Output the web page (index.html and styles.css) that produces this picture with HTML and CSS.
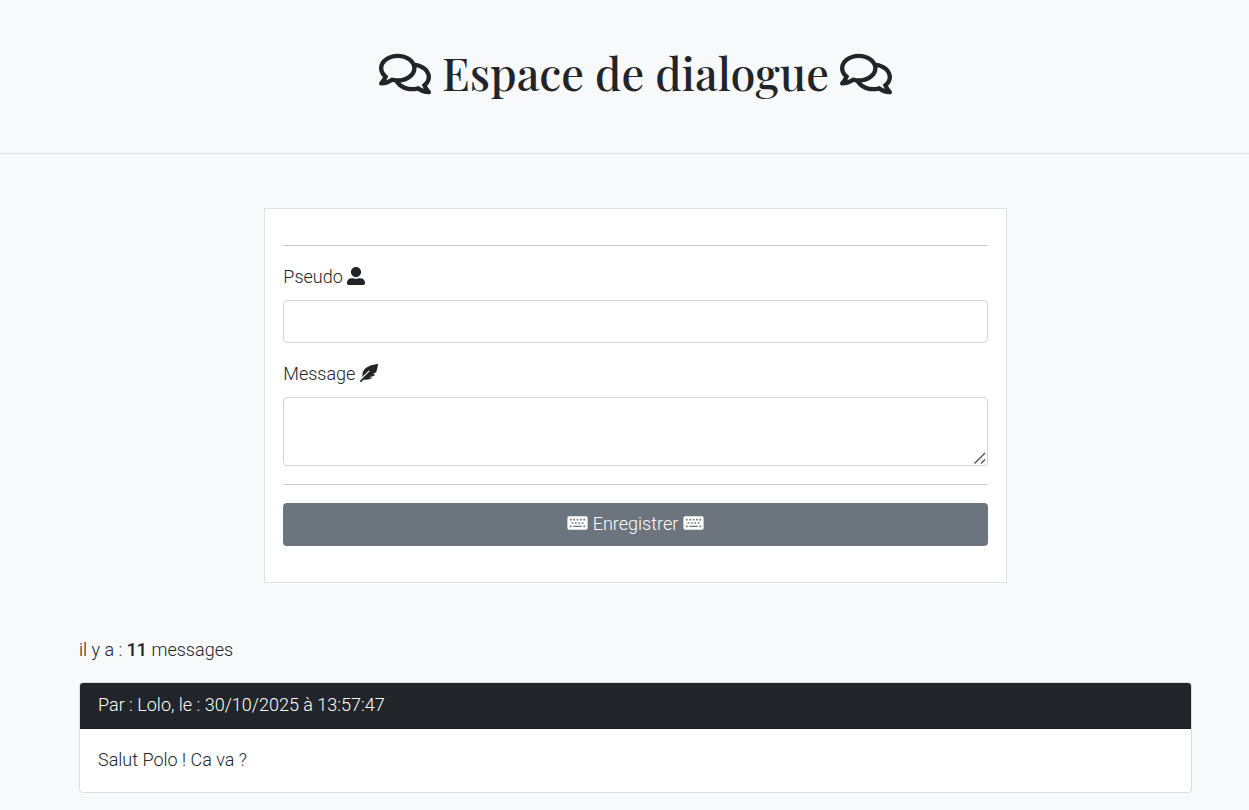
FILE: index.html
```html
<!DOCTYPE html>
<html lang="fr">
<head>
<meta charset="utf-8">
<meta name="viewport" content="width=device-width, initial-scale=1">
<title>Espace de dialogue</title>
<link rel="stylesheet" href="styles.css">
</head>
<body>
<svg class="sprite" aria-hidden="true">
  <symbol id="comments" viewBox="0 0 576 512"><path d="M532 386.2c27.5-27.1 44-61.1 44-98.2 0-80-76.5-146.1-176.2-157.9C368.3 72.5 294.3 32 208 32 93.1 32 0 103.6 0 192c0 37 16.5 71 44 98.2-15.3 30.7-37.3 54.5-37.7 54.9-6.3 6.7-8.1 16.5-4.4 25 3.6 8.5 12 14 21.2 14 53.5 0 96.7-20.2 125.2-38.8 9.2 2.1 18.7 3.7 28.4 4.9C208.1 407.6 281.8 448 368 448c20.8 0 40.8-2.4 59.8-6.8C456.3 459.7 499.4 480 553 480c9.2 0 17.5-5.5 21.2-14 3.6-8.5 1.9-18.3-4.4-25-.4-.3-22.5-24.1-37.8-54.8zm-392.8-92.3L122.1 305c-14.1 9.1-28.5 16.3-43.1 21.4 2.7-4.7 5.4-9.7 8-14.8l15.5-31.1L77.7 256C64.2 242.6 48 220.7 48 192c0-60.7 73.3-112 160-112s160 51.3 160 112-73.3 112-160 112c-16.5 0-33-1.9-49-5.6l-19.8-4.5zM498.3 352l-24.7 24.4 15.5 31.1c2.6 5.1 5.3 10.1 8 14.8-14.6-5.1-29-12.3-43.1-21.4l-17.1-11.1-19.9 4.6c-16 3.7-32.5 5.6-49 5.6-54 0-102.2-20.1-131.3-49.7C338 339.5 416 272.9 416 192c0-3.4-.4-6.7-.7-10C479.7 196.5 528 238.8 528 288c0 28.7-16.2 50.6-29.7 64z"/></symbol>
  <symbol id="user" viewBox="0 0 512 512"><path d="M256 288c79.5 0 144-64.5 144-144S335.5 0 256 0 112 64.5 112 144s64.5 144 144 144zm128 32h-55.1c-22.2 10.2-46.9 16-72.9 16s-50.6-5.8-72.9-16H128C57.3 320 0 377.3 0 448v16c0 26.5 21.5 48 48 48h416c26.5 0 48-21.5 48-48v-16c0-70.7-57.3-128-128-128z"/></symbol>
  <symbol id="feather" viewBox="0 0 512 512"><path d="M512 0C460.22 3.56 96.44 38.2 71.01 287.61c-3.09 26.66-4.84 53.44-5.99 80.24l178.87-178.69c6.25-6.25 16.4-6.25 22.65 0s6.25 16.38 0 22.63L7.04 471.03c-9.38 9.37-9.38 24.57 0 33.94 9.38 9.37 24.6 9.37 33.98 0l57.13-57.07c42.09-.14 84.15-2.53 125.96-7.36 53.48-5.44 97.02-26.47 132.58-56.54H255.74l146.79-48.88c11.25-14.89 21.37-30.71 30.45-47.12h-81.14l106.54-53.21C500.29 132.86 510.19 26.26 512 0z"/></symbol>
  <symbol id="keyboard" viewBox="0 0 576 512"><path fill-rule="evenodd" d="M48 64h480a48 48 0 0 1 48 48v288a48 48 0 0 1-48 48H48a48 48 0 0 1-48-48V112a48 48 0 0 1 48-48zM72 136v48h48v-48zM168 136v48h48v-48zM264 136v48h48v-48zM360 136v48h48v-48zM456 136v48h48v-48zM120 232v48h48v-48zM216 232v48h48v-48zM312 232v48h48v-48zM408 232v48h48v-48zM72 328v48h48v-48zM168 332v40h240v-40zM456 328v48h48v-48z"/></symbol>
</svg>

<header class="page-header">
  <h1 class="page-title">
    <svg class="title-icon" aria-hidden="true"><use href="#comments"/></svg>
    Espace de dialogue
    <svg class="title-icon" aria-hidden="true"><use href="#comments"/></svg>
  </h1>
</header>

<main class="container">
  <form class="message-form">
    <hr class="rule">
    <div class="field">
      <label class="label" for="pseudo">Pseudo <svg class="icon" aria-hidden="true"><use href="#user"/></svg></label>
      <input class="control" type="text" id="pseudo" name="pseudo">
    </div>
    <div class="field">
      <label class="label" for="message">Message <svg class="icon" aria-hidden="true"><use href="#feather"/></svg></label>
      <textarea class="control" id="message" name="message" rows="2"></textarea>
    </div>
    <hr class="rule">
    <button class="submit" type="submit"><svg class="icon icon-wide" aria-hidden="true"><use href="#keyboard"/></svg> Enregistrer <svg class="icon icon-wide" aria-hidden="true"><use href="#keyboard"/></svg></button>
  </form>

  <p class="count">il y a : <strong>11</strong> messages</p>

  <article class="card">
    <div class="card-header">Par : Lolo, le : 30/10/2025 à 13:57:47</div>
    <p class="card-body">Salut Polo ! Ca va ?</p>
  </article>
</main>
</body>
</html>
```
FILE: styles.css
```css
* {
  box-sizing: border-box;
}

body {
  margin: 0;
  background: #f8f9fb;
  color: #212529;
  font: 300 18px/25px Roboto, sans-serif;
}

.sprite {
  position: absolute;
  width: 0;
  height: 0;
}

.page-header,
.container {
  padding-left: 79px;
  padding-right: 57px;
}

.page-header {
  padding-top: 45px;
  padding-bottom: 54px;
  border-bottom: 1px solid #dee2e6;
}

.page-title {
  display: flex;
  align-items: flex-end;
  justify-content: center;
  gap: 11px;
  margin: 0;
  font: 500 45px/54px "Playfair Display", "Liberation Serif", serif;
}

.title-icon {
  width: 52px;
  height: 50px;
  fill: currentColor;
}

.container {
  padding-top: 54px;
  padding-bottom: 17px;
}

.message-form {
  width: 66.7%;
  margin: 0 auto 54px;
  padding: 18px 18px 36px;
  background: #fff;
  border: 1px solid #dee2e6;
}

.rule {
  height: 1px;
  margin: 18px 0;
  border: 0;
  background: #c7c8c9;
}

.field {
  margin-bottom: 18px;
}

.label {
  display: block;
  margin-bottom: 11px;
}

.control {
  display: block;
  width: 100%;
  padding: 8px 14px;
  background: #fff;
  border: 1px solid #ced4da;
  border-radius: 4px;
  color: inherit;
  font: inherit;
}

textarea.control {
  min-height: 69px;
  resize: vertical;
}

textarea.control::-webkit-resizer {
  background: url("data:image/svg+xml,%3Csvg xmlns='http://www.w3.org/2000/svg' width='15' height='15' viewBox='0 0 15 15'%3E%3Cpath d='M2.5 13.5L13 3M9 13.5L13 9.5' fill='none' stroke='%23505050' stroke-width='1.4'/%3E%3C/svg%3E") no-repeat right bottom;
}

.submit {
  display: block;
  width: 100%;
  padding: 8px 14px 10px;
  background: #6c757d;
  border: 0;
  border-radius: 4px;
  color: #fff;
  font: inherit;
}

.icon {
  width: 18px;
  height: 18px;
  fill: currentColor;
  vertical-align: -2px;
}

.icon-wide {
  width: 21px;
}

.count {
  margin: 0 0 20px;
}

.count strong {
  font-weight: 500;
}

.card {
  background: #fff;
  border: 1px solid #dcdddf;
  border-radius: 4px;
  overflow: hidden;
}

.card-header {
  padding: 9px 18px 11px;
  background: #212529;
  border-bottom: 1px solid #1c1f23;
  color: #fff;
}

.card-body {
  margin: 0;
  padding: 18px 18px 20px;
}
```
